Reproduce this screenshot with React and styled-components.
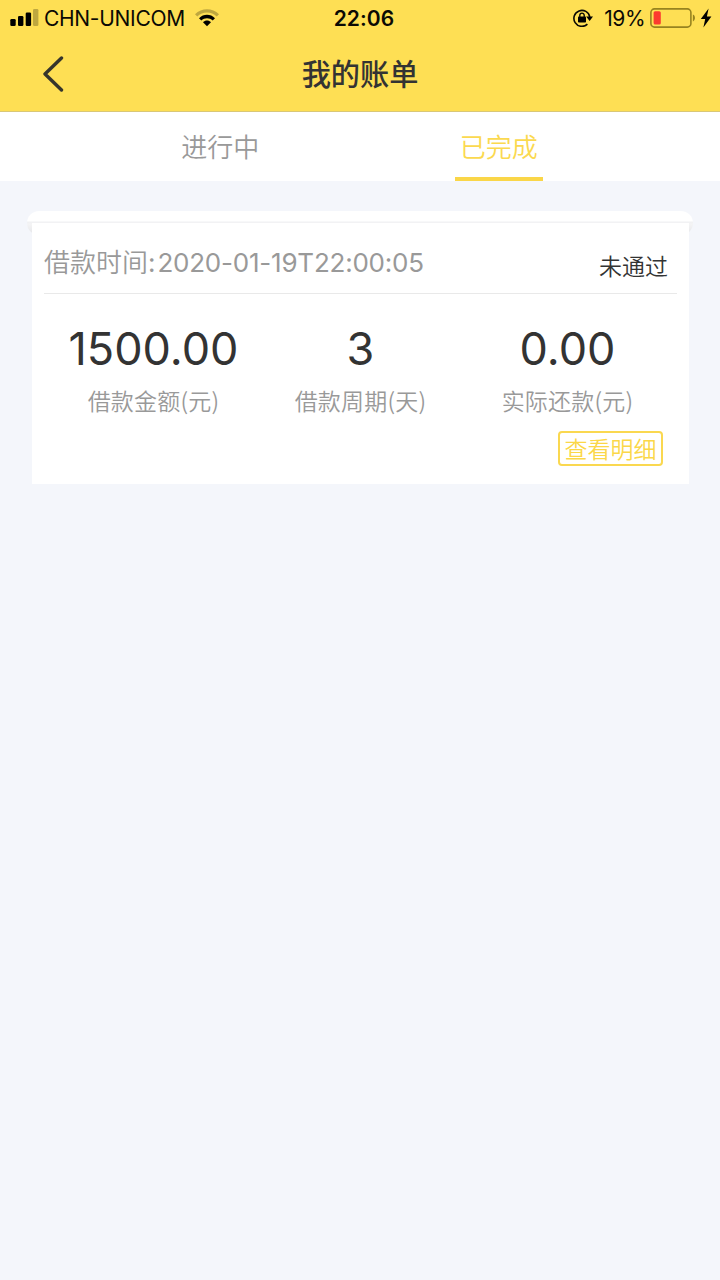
import React from "react";
import styled, { createGlobalStyle } from "styled-components";

const GlobalStyle = createGlobalStyle`
  * { box-sizing: border-box; }
  body {
    margin: 0;
    background: #f4f6fb;
    font-family: Inter, "Noto Sans CJK SC", sans-serif;
    color: #333;
  }
`;

const Screen = styled.div`
  width: 720px;
  min-height: 1280px;
  background: #f4f6fb;
`;

const TopArea = styled.header`
  height: 112px;
  background: #fedf54;
  border-bottom: 1px solid #d9c777;
`;

const StatusBar = styled.div`
  height: 36px;
  display: grid;
  grid-template-columns: 1fr auto 1fr;
  align-items: center;
  padding: 0 8px 0 10px;
  color: #0b0a04;
  font-size: 21px;
  line-height: 38px;
`;

const StatusGroup = styled.div`
  display: flex;
  align-items: center;
  height: 36px;
  justify-content: ${(p) => (p.$end ? "flex-end" : "flex-start")};

  svg {
    margin-bottom: 2px;
  }
`;

const Carrier = styled.span`
  margin: 0 10px 0 5px;
  letter-spacing: -0.3px;
`;

const Clock = styled.span`
  font-weight: 600;
  letter-spacing: 0.1px;
  padding-left: 6px;
`;

const Percent = styled.span`
  margin: 0 5px 0 11px;
  letter-spacing: -0.5px;
`;

const NavBar = styled.div`
  height: 75px;
  display: grid;
  grid-template-columns: 80px 1fr 80px;
  align-items: center;
`;

const BackButton = styled.button`
  border: 0;
  padding: 0 0 0 42px;
  background: none;
  display: flex;
`;

const Title = styled.h1`
  margin: 0;
  text-align: center;
  font-size: 29.2px;
  font-weight: 500;
  line-height: 77px;
`;

const Tabs = styled.nav`
  display: flex;
  height: 69px;
  padding: 0 82px 0 81px;
  background: #fff;
`;

const TabCell = styled.div`
  flex: 1;
  display: flex;
  justify-content: center;
`;

const Tab = styled.button`
  width: 88px;
  height: 69px;
  padding: 1px 0 0;
  border: 0;
  border-bottom: 4px solid ${(p) => (p.$active ? "#fad648" : "transparent")};
  background: none;
  color: ${(p) => (p.$active ? "#fbd94f" : "#999")};
  font: 350 26px/66px "Noto Sans CJK SC", sans-serif;
`;

const BillList = styled.main`
  padding: 30px 27px;
`;

const SlotBar = styled.div`
  height: 24px;
  border-radius: 12px;
  background: linear-gradient(#fff 0 10px, #f0f1f3 11px, #f4f4f5 13px, #e4e5e8 24px);
`;

const BillCard = styled.section`
  position: relative;
  height: 262px;
  margin: -13px 4px 0 5px;
  padding: 1px 12px 0;
  background: #fff;
  border-top: 1px solid #f2f2f4;
`;

const BillHead = styled.div`
  display: flex;
  justify-content: space-between;
  height: 70px;
  border-bottom: 1px solid #e9e9e9;
  padding-right: 9px;
`;

const LoanTime = styled.span`
  font-size: 26px;
  font-weight: 350;
  line-height: 78px;
  color: #999;
  white-space: nowrap;
`;

const Stamp = styled.span`
  font-weight: 400;
  letter-spacing: -0.1px;
`;

const TimeValue = styled.span`
  margin-left: 2px;
  letter-spacing: -0.22px;
`;

const Status = styled.span`
  font-size: 23px;
  font-weight: 350;
  line-height: 86px;
`;

const Figures = styled.div`
  display: flex;
  height: 136px;
  padding: 31px 6px 0 6px;
`;

const Figure = styled.div`
  flex: 1;
  text-align: center;
`;

const Amount = styled.div`
  font-size: 45px;
  font-weight: 400;
  line-height: 48px;
`;

const Label = styled.div`
  margin-top: 7px;
  font: 350 23px/40px "Noto Sans CJK SC", sans-serif;
  letter-spacing: 0.2px;
  color: #999;
`;

const CardFoot = styled.div`
  display: flex;
  justify-content: flex-end;
  padding: 1px 14px 0 0;
`;

const DetailButton = styled.button`
  width: 105px;
  height: 35px;
  padding: 0;
  border: 2px solid #fad850;
  border-radius: 4px;
  background: #fff;
  color: #fbd748;
  font: 350 23px/31px "Noto Sans CJK SC", sans-serif;
`;

const SignalIcon = () => (
  <svg width="29" height="18" viewBox="0 0 29 18">
    <rect x="0.3" y="10" width="5.4" height="7" rx="1.3" />
    <rect x="8" y="7" width="5.4" height="10" rx="1.3" />
    <rect x="15.7" y="3.5" width="5.4" height="13.5" rx="1.3" />
    <rect x="23" y="0" width="5.4" height="17" rx="1.3" opacity="0.25" />
  </svg>
);

const WifiIcon = () => (
  <svg width="24" height="18" viewBox="0 0 24 18">
    <path d="M0 5.2C6.5-1.5 17.5-1.5 24 5.2L21.7 7.6C16.4 2.2 7.6 2.2 2.3 7.6Z" opacity="0.25" />
    <path d="M4 9.2C8.5 4.7 15.5 4.7 20 9.2L17.7 11.6C14.5 8.4 9.5 8.4 6.3 11.6Z" />
    <path d="M8 13.2C10.2 11 13.8 11 16 13.2L12 17.3Z" />
  </svg>
);

const LockIcon = () => (
  <svg width="20" height="18" viewBox="0 0 20 18">
    <path d="M14.4 15.2A8 8 0 1 1 16.8 8" fill="none" stroke="#0b0a04" strokeWidth="1.6" />
    <path d="M13.2 7.6H20L16.6 12Z" />
    <rect x="5" y="7.4" width="8" height="6.2" rx="0.8" />
    <path d="M6.8 8V6.3a2.2 2.2 0 0 1 4.4 0V8" fill="none" stroke="#0b0a04" strokeWidth="1.4" />
  </svg>
);

const BatteryIcon = () => (
  <svg width="50" height="20" viewBox="0 0 50 20">
    <rect x="0.9" y="0.9" width="40" height="18.2" rx="3.6" fill="none" stroke="#97831f" strokeWidth="1.6" />
    <rect x="3.6" y="3.2" width="7.2" height="13.4" rx="1.6" fill="#fb3b2f" />
    <path d="M42.9 6.6C45.6 7.6 45.6 12.4 42.9 13.4Z" fill="#97831f" />
  </svg>
);

const BoltIcon = () => (
  <svg width="12" height="20" viewBox="0 0 12 20">
    <path d="M8.6 0.6L0.8 11H5.2L3.4 19.4L11.4 8.5H6.9Z" />
  </svg>
);

const BackIcon = () => (
  <svg width="22" height="38" viewBox="0 0 22 38">
    <path d="M19.5 2L3 18L19.5 34" fill="none" stroke="#36352c" strokeWidth="3.4" strokeLinecap="round" strokeLinejoin="round" />
  </svg>
);

const figures = [
  { value: "1500.00", label: "借款金额(元)" },
  { value: "3", label: "借款周期(天)" },
  { value: "0.00", label: "实际还款(元)" },
];

export default function App() {
  return (
    <Screen>
      <GlobalStyle />
      <TopArea>
        <StatusBar>
          <StatusGroup>
            <SignalIcon />
            <Carrier>CHN-UNICOM</Carrier>
            <WifiIcon />
          </StatusGroup>
          <Clock>22:06</Clock>
          <StatusGroup $end>
            <LockIcon />
            <Percent>19%</Percent>
            <BatteryIcon />
            <BoltIcon />
          </StatusGroup>
        </StatusBar>
        <NavBar>
          <BackButton aria-label="返回">
            <BackIcon />
          </BackButton>
          <Title>我的账单</Title>
        </NavBar>
      </TopArea>
      <Tabs>
        <TabCell>
          <Tab>进行中</Tab>
        </TabCell>
        <TabCell>
          <Tab $active>已完成</Tab>
        </TabCell>
      </Tabs>
      <BillList>
        <SlotBar />
        <BillCard>
          <BillHead>
            <LoanTime>
              借款时间
              <Stamp>
                :<TimeValue>2020-01-19T22:00:05</TimeValue>
              </Stamp>
            </LoanTime>
            <Status>未通过</Status>
          </BillHead>
          <Figures>
            {figures.map((f) => (
              <Figure key={f.label}>
                <Amount>{f.value}</Amount>
                <Label>{f.label}</Label>
              </Figure>
            ))}
          </Figures>
          <CardFoot>
            <DetailButton>查看明细</DetailButton>
          </CardFoot>
        </BillCard>
      </BillList>
    </Screen>
  );
}
